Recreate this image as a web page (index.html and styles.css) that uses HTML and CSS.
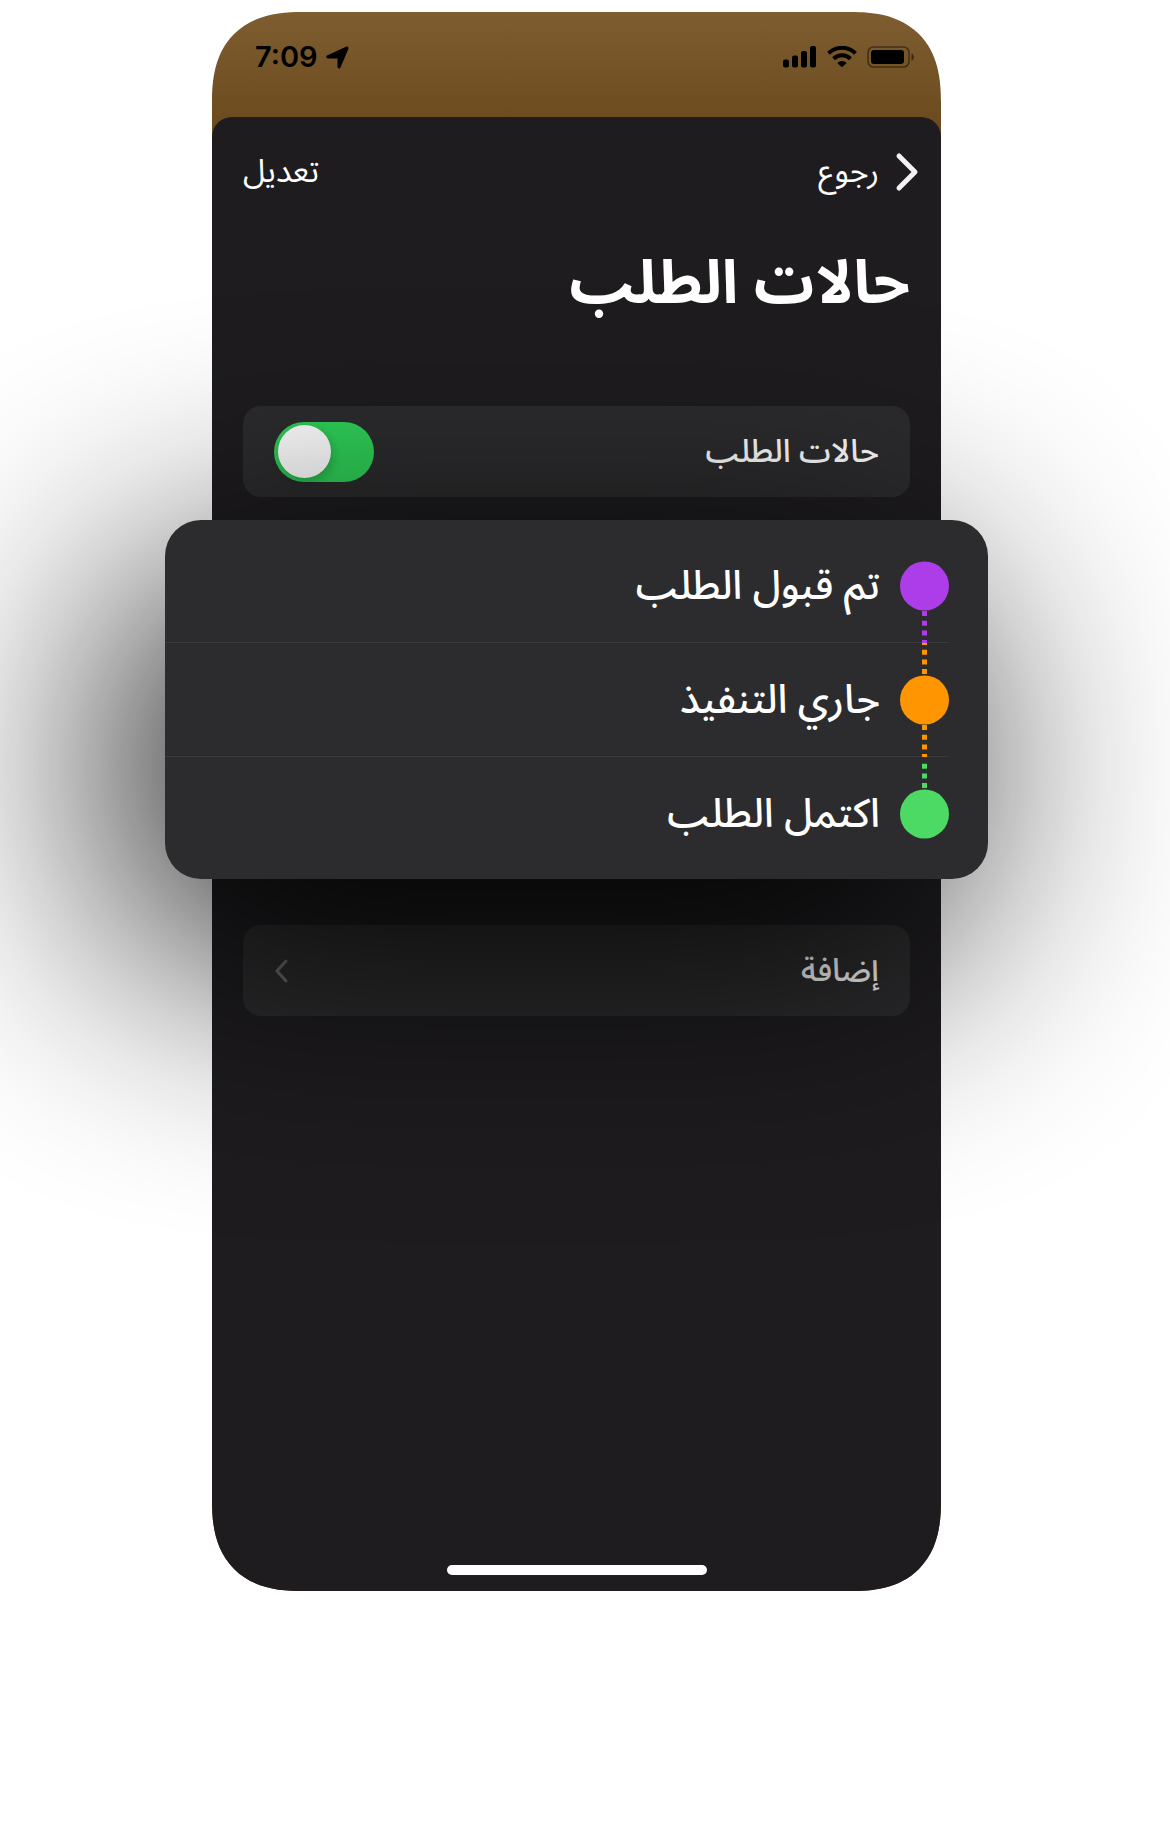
FILE: index.html
```
<!DOCTYPE html>
<html lang="ar" dir="rtl">
<head>
	<meta charset="utf-8">
	<meta name="viewport" content="width=device-width, initial-scale=1">
	<title>حالات الطلب</title>
	<link rel="stylesheet" href="styles.css">
</head>
<body>
	<main class="phone">
		<div class="status-bar" dir="ltr">
			<div class="clock">
				<span>7:09</span>
				<svg width="23" height="23" viewBox="0 0 23 23"><path d="M1.600 9.300 20 .8c1.600-.7 3 .6 2.300 2.200L14.600 21.200c-.8 1.900-3.100 1.500-3.100-.5v-8.200H2.200C-.2 12.500-.4 10.200 1.600 9.300z"/></svg>
			</div>
			<div class="signals">
				<svg width="34" height="22" viewBox="0 0 34 22"><rect x="0" y="13.500" width="6" height="8" rx="2"/><rect x="9" y="9.500" width="6" height="12" rx="2"/><rect x="18" y="5" width="6" height="16.500" rx="2"/><rect x="27" y="0" width="6" height="21.500" rx="2"/></svg>
				<svg width="30" height="22" viewBox="0 0 30 22"><g fill="none" stroke="#000" stroke-width="4"><path d="M1.500 7.300a19.300 19.300 0 0 1 27 0"/><path d="M6.600 12.800a12 12 0 0 1 16.800 0"/></g><path d="M15 21.300 10.300 16.900a6.700 6.700 0 0 1 9.400 0z"/></svg>
				<svg width="48" height="22" viewBox="0 0 48 22"><rect x="1" y="1" width="41" height="20" rx="5.500" fill="none" stroke="#000" stroke-opacity=".45" stroke-width="1.600"/><rect x="4" y="4" width="33" height="14" rx="3"/><path d="M44.500 7.500c3.200 1.200 3.200 6 0 7.200z" opacity=".5"/></svg>
			</div>
		</div>

		<div class="sheet">
			<nav class="nav">
				<button class="back" type="button">
					<svg width="24" height="40" viewBox="0 0 24 40"><path d="M4 4 20 20 4 36"/></svg>
					<span>رجوع</span>
				</button>
				<button class="edit" type="button">تعديل</button>
			</nav>

			<h1 class="title">حالات الطلب</h1>

			<label class="row">
				<span>حالات الطلب</span>
				<input class="switch" type="checkbox" role="switch" checked>
			</label>

			<ul class="states">
				<li class="state">
					<svg class="rail" width="49" height="114" viewBox="0 0 49 114"><path class="dots" d="M24.500 82V114" stroke="#ad3de8"/><circle cx="24.500" cy="57" r="24.500" fill="#ad3de8"/></svg>
					<span>تم قبول الطلب</span>
				</li>
				<li class="state">
					<svg class="rail" width="49" height="114" viewBox="0 0 49 114"><path class="dots" d="M24.500 0V33" stroke="#ff9500" stroke-dashoffset="3"/><path class="dots" d="M24.500 82V114" stroke="#ff9500"/><circle cx="24.500" cy="57" r="24.500" fill="#ff9500"/></svg>
					<span>جاري التنفيذ</span>
				</li>
				<li class="state">
					<svg class="rail" width="49" height="114" viewBox="0 0 49 114"><path class="dots" d="M24.500 2V33" stroke="#4cd964" stroke-dashoffset="5"/><circle cx="24.500" cy="57" r="24.500" fill="#4cd964"/></svg>
					<span>اكتمل الطلب</span>
				</li>
			</ul>

			<a class="row" href="#">
				<span>إضافة</span>
				<svg class="chevron" width="14" height="24" viewBox="0 0 14 24"><path d="M12 2 3 12l9 10"/></svg>
			</a>

			<div class="home-bar"></div>
		</div>
	</main>
</body>
</html>
```

FILE: styles.css
```
* {
	box-sizing: border-box;
}
body {
	margin: 0;
	padding: 12px 17px 242px 0;
	min-height: 100vh;
	overflow-x: hidden;
	background: #fff;
	color: #fff;
	font-family: "Noto Sans Arabic", "Noto Sans", "DejaVu Sans", sans-serif;
	direction: ltr;
}
.phone {
	display: flex;
	flex-direction: column;
	width: 100%;
	max-width: 729px;
	min-height: calc(100vh - 254px);
	margin: 0 auto;
	border-radius: 90px;
	corner-shape: superellipse(1.3);
	background: linear-gradient(#7e5d30, #6c4c1f 110px);
	direction: rtl;
}
.status-bar {
	display: flex;
	justify-content: space-between;
	align-items: center;
	height: 105px;
	padding: 0 26px 15px 43px;
	color: #000;
}
.clock,
.signals {
	display: flex;
	align-items: center;
	gap: 8px;
}
.clock {
	font: 600 29px/36px Inter, sans-serif;
}
.signals {
	gap: 10px;
}
.sheet {
	display: flex;
	flex: 1;
	flex-direction: column;
	padding: 0 31px 16px;
	border-radius: 20px 20px 90px 90px;
	corner-shape: round round superellipse(1.3) superellipse(1.3);
	background: #1e1c1f;
}
.nav {
	display: flex;
	justify-content: space-between;
	align-items: center;
	height: 110px;
}
.nav button {
	padding: 0;
	border: 0;
	background: none;
	color: #fff;
	font: inherit;
	font-size: 32px;
}
.back {
	display: flex;
	align-items: center;
	gap: 16px;
	margin-right: -9px;
}
.back path {
	fill: none;
	stroke: #f2f2f2;
	stroke-width: 5;
	stroke-linecap: round;
	stroke-linejoin: round;
}
.title {
	margin: 0;
	padding: 5px 0 70px;
	font-size: 60px;
	line-height: 104px;
}
.row {
	display: flex;
	justify-content: space-between;
	align-items: center;
	height: 91px;
	padding: 0 31px;
	border-radius: 18px;
	background: #2c2c2e;
	color: #fff;
	font-size: 32px;
	font-weight: 500;
	text-decoration: none;
}
.switch {
	width: 100px;
	height: 60px;
	margin: 0;
	padding: 3px 4px;
	border-radius: 30px;
	background: #2fd158;
	appearance: none;
}
.switch::before {
	content: "";
	display: block;
	width: 53px;
	height: 53px;
	margin-right: auto;
	border-radius: 50%;
	background: #fff;
	box-shadow: 2px 4px 10px rgba(0, 0, 0, .2);
}
.states {
	position: relative;
	isolation: isolate;
	margin: 23px -78px 46px;
	padding: 9px 0 8px;
	list-style: none;
}
/* wide soft shadow, then the panel itself */
.states::before,
.states::after {
	content: "";
	position: absolute;
	z-index: -2;
	inset: 0;
	border-radius: 36px;
	background: #000;
}
.states::before {
	translate: -42px 66px;
	filter: blur(135px);
	opacity: .95;
}
.states::after {
	z-index: -1;
	background: #2c2c2e;
}
.state {
	display: flex;
	align-items: center;
	gap: 20px;
	height: 114px;
	margin-right: 39px;
	font-size: 40px;
	font-weight: 500;
}
.state:not(:last-child) {
	background: linear-gradient(#3b3b3d, #3b3b3d) bottom / 100% 1px no-repeat;
}
.dots {
	stroke-width: 5;
	stroke-dasharray: 5 4.7;
}
.chevron {
	fill: none;
	stroke: #6a6a6c;
	stroke-width: 3;
	stroke-linecap: round;
	stroke-linejoin: round;
}
.home-bar {
	width: 260px;
	height: 10px;
	margin: auto auto 0;
	border-radius: 5px;
	background: #fff;
}
```
